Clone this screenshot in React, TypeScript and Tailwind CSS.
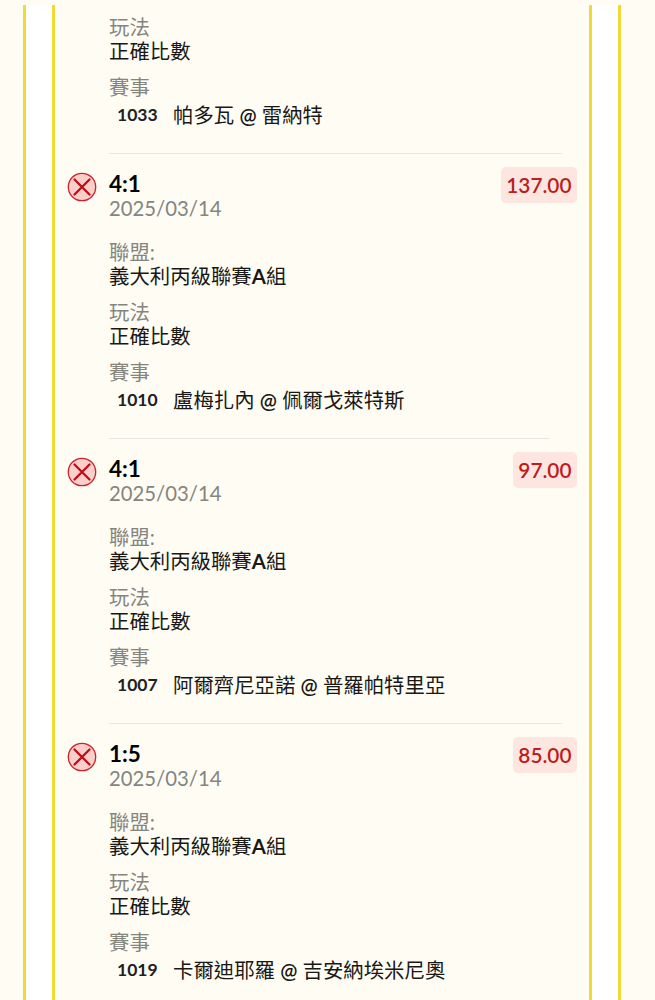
type Bet = {
  score: string;
  date: string;
  league: string;
  code: string;
  home: string;
  away: string;
  odds: string;
  short?: boolean;
};

const bets: Bet[] = [
  {
    score: "4:1",
    date: "2025/03/14",
    league: "義大利丙級聯賽",
    code: "1010",
    home: "盧梅扎內",
    away: "佩爾戈萊特斯",
    odds: "137.00",
  },
  {
    score: "4:1",
    date: "2025/03/14",
    league: "義大利丙級聯賽",
    code: "1007",
    home: "阿爾齊尼亞諾",
    away: "普羅帕特里亞",
    odds: "97.00",
    short: true,
  },
  {
    score: "1:5",
    date: "2025/03/14",
    league: "義大利丙級聯賽",
    code: "1019",
    home: "卡爾迪耶羅",
    away: "吉安納埃米尼奧",
    odds: "85.00",
  },
];

function LostIcon() {
  return (
    <svg width="30" height="30" viewBox="0 0 30 30" fill="none">
      <circle cx="15" cy="15" r="13.7" fill="#fdcfcb" stroke="#c9242c" strokeWidth="1.3" />
      <path
        d="M7.5 7.5L22.5 22.5M22.5 7.5L7.5 22.5"
        stroke="#c00d16"
        strokeWidth="2.3"
        strokeLinecap="round"
      />
    </svg>
  );
}

function Label({ children }: { children: React.ReactNode }) {
  return <div className="h-6 text-[#858580]">{children}</div>;
}

function Match({ code, home, away }: { code: string; home: string; away: string }) {
  return (
    <div className="mt-1 flex h-6">
      <span className="ml-2 w-14 text-[17.5px] font-bold text-[#22211f]">{code}</span>
      <span>
        {home} <span className="font-semibold">@</span> {away}
      </span>
    </div>
  );
}

function PlayType() {
  return (
    <div className="mb-3">
      <Label>玩法</Label>
      <div className="h-6">正確比數</div>
    </div>
  );
}

function BetItem({ bet }: { bet: Bet }) {
  return (
    <div className="flex h-[285px] shrink-0">
      <div className="w-[54px] shrink-0 pl-3 pt-[19px]">
        <LostIcon />
      </div>
      <div className="min-w-0 flex-1">
        <div className={bet.short ? "h-px w-[441px] bg-[#e9e7e2]" : "h-px w-[453px] bg-[#e9e7e2]"} />
        <div className="flex justify-between pr-3">
          <div className="pt-[18px]">
            <div className="h-6 text-[22.5px] font-bold text-black">{bet.score}</div>
            <div className="h-6 text-[20.3px] text-[#858580]">{bet.date}</div>
          </div>
          <div className="mt-[13px] h-9 rounded-[5px] bg-[#fde6df] px-[5.5px] text-[20.8px] font-semibold leading-9 text-[#bd1c20]">
            {bet.odds}
          </div>
        </div>
        <div className="mb-3 mt-5">
          <Label>聯盟:</Label>
          <div className="h-6">
            {bet.league}
            <b>A</b>組
          </div>
        </div>
        <PlayType />
        <Label>賽事</Label>
        <Match code={bet.code} home={bet.home} away={bet.away} />
      </div>
    </div>
  );
}

export default function App() {
  return (
    <div className="h-[1000px] overflow-hidden bg-[#fffcf4] pl-[23px] pr-[34px] pt-[5px] font-['Lato','Noto_Sans_CJK_TC',sans-serif] text-[20.4px] leading-6 text-[#191816]">
      <div className="h-full border-x-[3px] border-[#f2da35] bg-white px-[26px]">
        <div className="flex h-full flex-col overflow-hidden border-x-[3px] border-[#f2da35] bg-[#fffcf4]">
          <div className="h-[148px] shrink-0 pl-[54px] pt-[10px]">
            <PlayType />
            <Label>賽事</Label>
            <Match code="1033" home="帕多瓦" away="雷納特" />
          </div>
          {bets.map((bet) => (
            <BetItem key={bet.code} bet={bet} />
          ))}
        </div>
      </div>
    </div>
  );
}
